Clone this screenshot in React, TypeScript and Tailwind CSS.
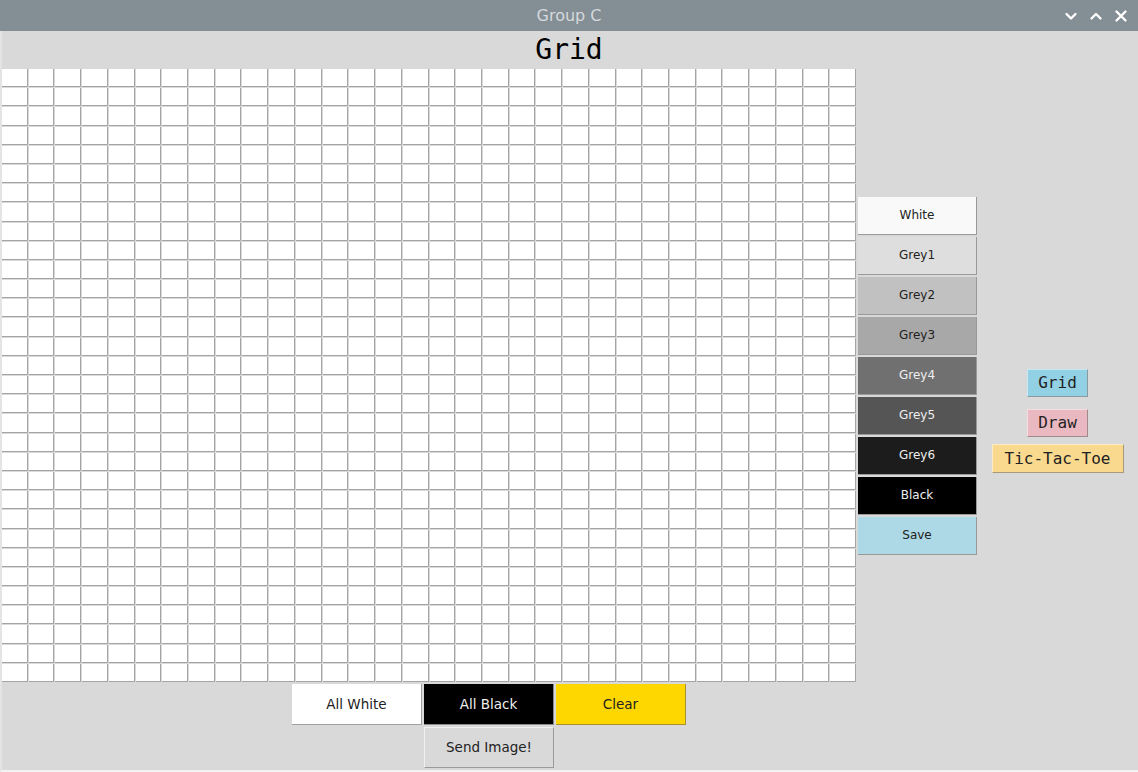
const ROWS = 32;
const COLS = 32;

const shades = [
  { label: 'White', bg: 'bg-[#f9f9f9]', fg: 'text-[#222]' },
  { label: 'Grey1', bg: 'bg-[#dedede]', fg: 'text-[#222]' },
  { label: 'Grey2', bg: 'bg-[#c1c1c1]', fg: 'text-[#222]' },
  { label: 'Grey3', bg: 'bg-[#a8a8a8]', fg: 'text-[#222]' },
  { label: 'Grey4', bg: 'bg-[#707070]', fg: 'text-[#eee]' },
  { label: 'Grey5', bg: 'bg-[#555555]', fg: 'text-[#eee]' },
  { label: 'Grey6', bg: 'bg-[#1c1c1c]', fg: 'text-[#eee]' },
  { label: 'Black', bg: 'bg-black', fg: 'text-[#eee]' },
  { label: 'Save', bg: 'bg-[#add8e6]', fg: 'text-[#222]' },
];

function TitleBar() {
  return (
    <div className="relative h-[31px] shrink-0 bg-[#848e95] flex items-center justify-center">
      <span className="text-[16px] text-[#d5d9dc]" style={{ fontFamily: '"DejaVu Sans", sans-serif' }}>Group C</span>
      <div className="absolute right-[10px] top-0 h-full flex items-center gap-[11px]">
        <svg width="14" height="14" viewBox="0 0 14 14" fill="none" stroke="white" strokeWidth="2.4" strokeLinecap="round" strokeLinejoin="round">
          <path d="M2.5 5 L7 9.5 L11.5 5" />
        </svg>
        <svg width="14" height="14" viewBox="0 0 14 14" fill="none" stroke="white" strokeWidth="2.4" strokeLinecap="round" strokeLinejoin="round">
          <path d="M2.5 9.5 L7 5 L11.5 9.5" />
        </svg>
        <svg width="14" height="14" viewBox="0 0 14 14" fill="none" stroke="white" strokeWidth="2.4" strokeLinecap="round">
          <path d="M2.5 2.5 L11.5 11.5 M11.5 2.5 L2.5 11.5" />
        </svg>
      </div>
    </div>
  );
}

export default function App() {
  const cells = Array.from({ length: ROWS * COLS });

  return (
    <div className="w-[1138px] h-[772px] bg-[#d9d9d9] flex flex-col overflow-hidden" style={{ fontFamily: '"DejaVu Sans", sans-serif' }}>
      <TitleBar />

      <div className="flex-1 flex flex-col border-l-2 border-[#e4e4e4] border-b-2 border-b-[#f2f2f2]">
        {/* Heading */}
        <div className="h-[38px] flex items-center justify-center text-[28px] text-black pr-[2px]" style={{ fontFamily: '"DejaVu Sans Mono", monospace' }}>
          Grid
        </div>

        <div className="flex">
          {/* Pixel grid */}
          <div className="w-[854px] h-[613px] grid grid-cols-[repeat(32,1fr)] grid-rows-[repeat(32,1fr)] gap-px">
            {cells.map((_, i) => (
              <div key={i} className="bg-white border-r border-b border-[#a4a4a4]" />
            ))}
          </div>

          {/* Shade buttons */}
          <div className="ml-[2px] w-[119px] flex flex-col justify-center gap-[2px]">
            {shades.map((s) => (
              <div
                key={s.label}
                className={`h-[38px] flex items-center justify-center text-[12px] border-r border-b border-[#9a9a9a] ${s.bg} ${s.fg}`}
              >
                {s.label}
              </div>
            ))}
          </div>

          {/* Mode buttons */}
          <div className="flex-1 flex flex-col items-center pt-[300px]" style={{ fontFamily: '"DejaVu Sans Mono", monospace' }}>
            <div className="h-[28px] w-[61px] flex items-center justify-center text-[16px] text-[#222] bg-[#92d0e3] border-r border-b border-[#8a9a9f] border-t border-l border-t-[#c8e8f1] border-l-[#c8e8f1]">
              Grid
            </div>
            <div className="mt-[12px] h-[28px] w-[61px] flex items-center justify-center text-[16px] text-[#222] bg-[#eab8c0] border-r border-b border-[#a08a8e] border-t border-l border-t-[#f6dde0] border-l-[#f6dde0]">
              Draw
            </div>
            <div className="mt-[7px] h-[29px] w-[132px] flex items-center justify-center text-[16px] text-[#222] bg-[#f8d98e] border-r border-b border-[#a89a78] border-t border-l border-t-[#fcecc6] border-l-[#fcecc6]">
              Tic-Tac-Toe
            </div>
          </div>
        </div>

        {/* Bottom actions */}
        <div className="ml-[290px] mt-[2px] grid grid-cols-[130px_130px_130px] grid-rows-[41px_41px] gap-[2px] text-[13.5px]">
          <div className="flex items-center justify-center bg-white text-[#222] border-r border-b border-[#a0a0a0]">All White</div>
          <div className="flex items-center justify-center bg-black text-[#eee] border-r border-b border-[#8a8a8a]">All Black</div>
          <div className="flex items-center justify-center bg-[#ffd700] text-[#222] border-r border-b border-[#a89030]">Clear</div>
          <div className="col-start-2 flex items-center justify-center bg-[#d9d9d9] text-[#222] border-r border-b border-[#9a9a9a] border-t border-l border-t-[#f0f0f0] border-l-[#f0f0f0]">Send Image!</div>
        </div>
      </div>
    </div>
  );
}
